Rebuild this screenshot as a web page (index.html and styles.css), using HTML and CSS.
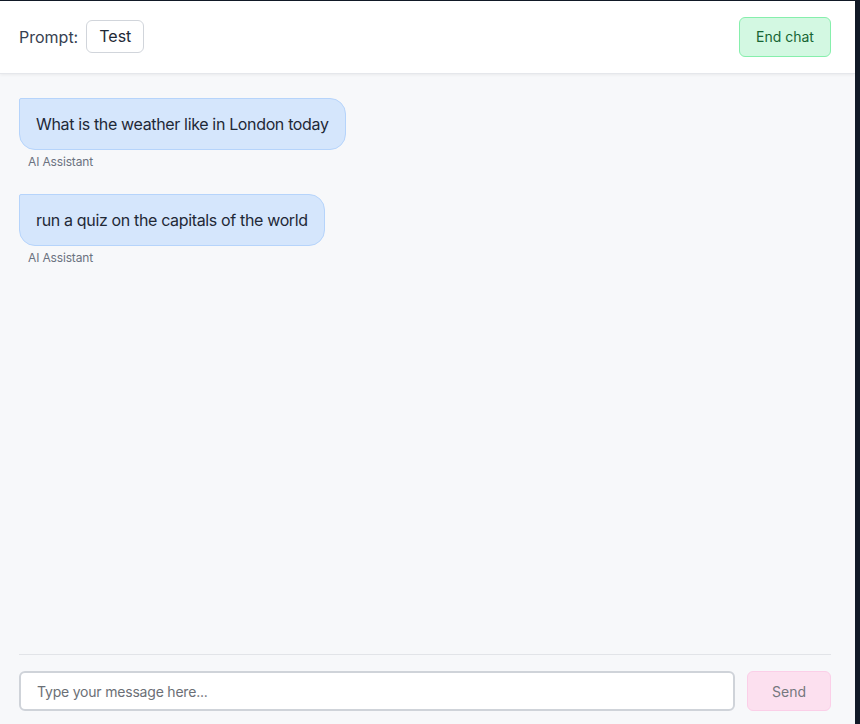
FILE: index.html
```html
<!DOCTYPE html>
<html lang="en">
<head>
<meta charset="utf-8">
<title>Chat</title>
<link rel="stylesheet" href="styles.css">
</head>
<body>
<div class="frame">
  <div class="app">
    <header class="header">
      <div class="prompt">
        <span class="prompt-label">Prompt:</span>
        <span class="prompt-value">Test</span>
      </div>
      <button class="end-btn">End chat</button>
    </header>
    <main class="messages">
      <div class="msg">
        <div class="bubble">What is the weather like in London today</div>
        <div class="sender">AI Assistant</div>
      </div>
      <div class="msg">
        <div class="bubble">run a quiz on the capitals of the world</div>
        <div class="sender">AI Assistant</div>
      </div>
    </main>
    <footer class="composer">
      <div class="composer-row">
        <input class="input" type="text" placeholder="Type your message here...">
        <button class="send-btn">Send</button>
      </div>
    </footer>
  </div>
</div>
</body>
</html>
```
FILE: styles.css
```css
* { box-sizing: border-box; }
html, body {
  margin: 0;
  height: 100%;
  background: #121a27;
  font-family: Inter, "Noto Sans", sans-serif;
}
.frame {
  height: 100%;
  padding: 1px 5px 0 0;
}
.app {
  height: 100%;
  background: #f7f8fa;
  display: flex;
  flex-direction: column;
}
.header {
  height: 73px;
  flex: none;
  background: #ffffff;
  border-bottom: 1px solid #e5e7eb;
  box-shadow: 0 1px 3px rgba(0,0,0,0.06);
  display: flex;
  align-items: center;
  justify-content: space-between;
  padding: 0 24px 0 19px;
  position: relative;
  z-index: 1;
}
.prompt {
  display: flex;
  align-items: center;
  gap: 8px;
  margin-top: -1px;
}
.prompt-label {
  font-size: 16px;
  color: #374151;
}
.prompt-value {
  font-size: 16px;
  color: #1f2937;
  border: 1px solid #d1d5db;
  border-radius: 6px;
  padding: 0 12px;
  height: 33px;
  line-height: 31px;
  background: #fff;
}
.end-btn {
  font-family: inherit;
  font-size: 14px;
  color: #166534;
  background: #d3f8e2;
  border: 1px solid #86efac;
  border-radius: 6px;
  height: 40px;
  width: 92px;
  padding: 0;
  margin-top: -1px;
}
.messages {
  flex: 1;
  padding: 24px 24px 0 19px;
  display: flex;
  flex-direction: column;
  gap: 24px;
  align-items: flex-start;
}
.msg {
  display: flex;
  flex-direction: column;
  align-items: flex-start;
}
.bubble {
  background: #d5e6fc;
  border: 1px solid #b6d4fb;
  border-radius: 2px 16px 16px 16px;
  padding: 13px 16px;
  font-size: 16px;
  line-height: 24px;
  letter-spacing: -0.35px;
  color: #1f2937;
}
.sender {
  font-size: 12px;
  line-height: 16px;
  letter-spacing: -0.15px;
  color: #6b7280;
  margin: 4px 0 0 9px;
}
.composer {
  flex: none;
  padding: 0 24px 13px 19px;
}
.composer-row {
  border-top: 1px solid #e2e4e8;
  padding-top: 16px;
  display: flex;
  gap: 12px;
}
.input {
  flex: 1;
  height: 40px;
  border: 2px solid #cfd3d9;
  border-radius: 6px;
  background: #fff;
  padding: 0 16px;
  font-family: inherit;
  font-size: 14px;
  letter-spacing: -0.2px;
  color: #1f2937;
  outline: none;
}
.input::placeholder { color: #6b6f76; }
.send-btn {
  width: 84px;
  height: 40px;
  background: #fce0ef;
  border: 1px solid #fbcfe8;
  border-radius: 6px;
  color: #75787e;
  font-family: inherit;
  font-size: 14px;
  padding: 0;
}
```
